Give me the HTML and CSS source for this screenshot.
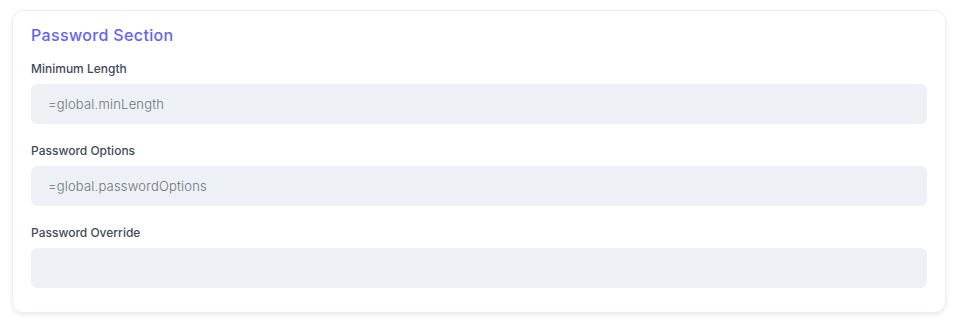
FILE: index.html
```html
<!DOCTYPE html>
<html>
<head>
<meta charset="utf-8">
<link rel="stylesheet" href="styles.css">
</head>
<body>
<section class="card">
  <h2 class="title">Password Section</h2>
  <div class="field">
    <label class="label">Minimum Length</label>
    <div class="input">=global.minLength</div>
  </div>
  <div class="field">
    <label class="label">Password Options</label>
    <div class="input">=global.passwordOptions</div>
  </div>
  <div class="field">
    <label class="label">Password Override</label>
    <div class="input"></div>
  </div>
</section>
</body>
</html>
```
FILE: styles.css
```css
html, body {
  margin: 0;
  background: #ffffff;
}
body {
  padding: 10px 11px 10px 12px;
  font-family: "Inter", "Noto Sans", sans-serif;
}
.card {
  border: 1px solid #eceef4;
  border-radius: 12px;
  box-shadow: 0 2px 4px rgba(30, 41, 59, 0.10);
  padding: 12px 18px 24px 18px;
  display: flex;
  flex-direction: column;
  gap: 13px;
}
.title {
  margin: 0;
  font-size: 16px;
  line-height: 24px;
  font-weight: 500;
  letter-spacing: 0.35px;
  color: #6563f2;
}
.field {
  display: flex;
  flex-direction: column;
  gap: 6px;
}
.field + .field {
  margin-top: 5px;
}
.label {
  font-size: 12px;
  line-height: 18px;
  font-weight: 500;
  color: #3f4a5b;
}
.input {
  height: 40px;
  box-sizing: border-box;
  background: #edf1f5;
  border-radius: 6px;
  padding: 0 17px;
  display: flex;
  align-items: center;
  font-size: 13px;
  font-weight: 300;
  letter-spacing: 0.2px;
  color: #6b7280;
}
```
